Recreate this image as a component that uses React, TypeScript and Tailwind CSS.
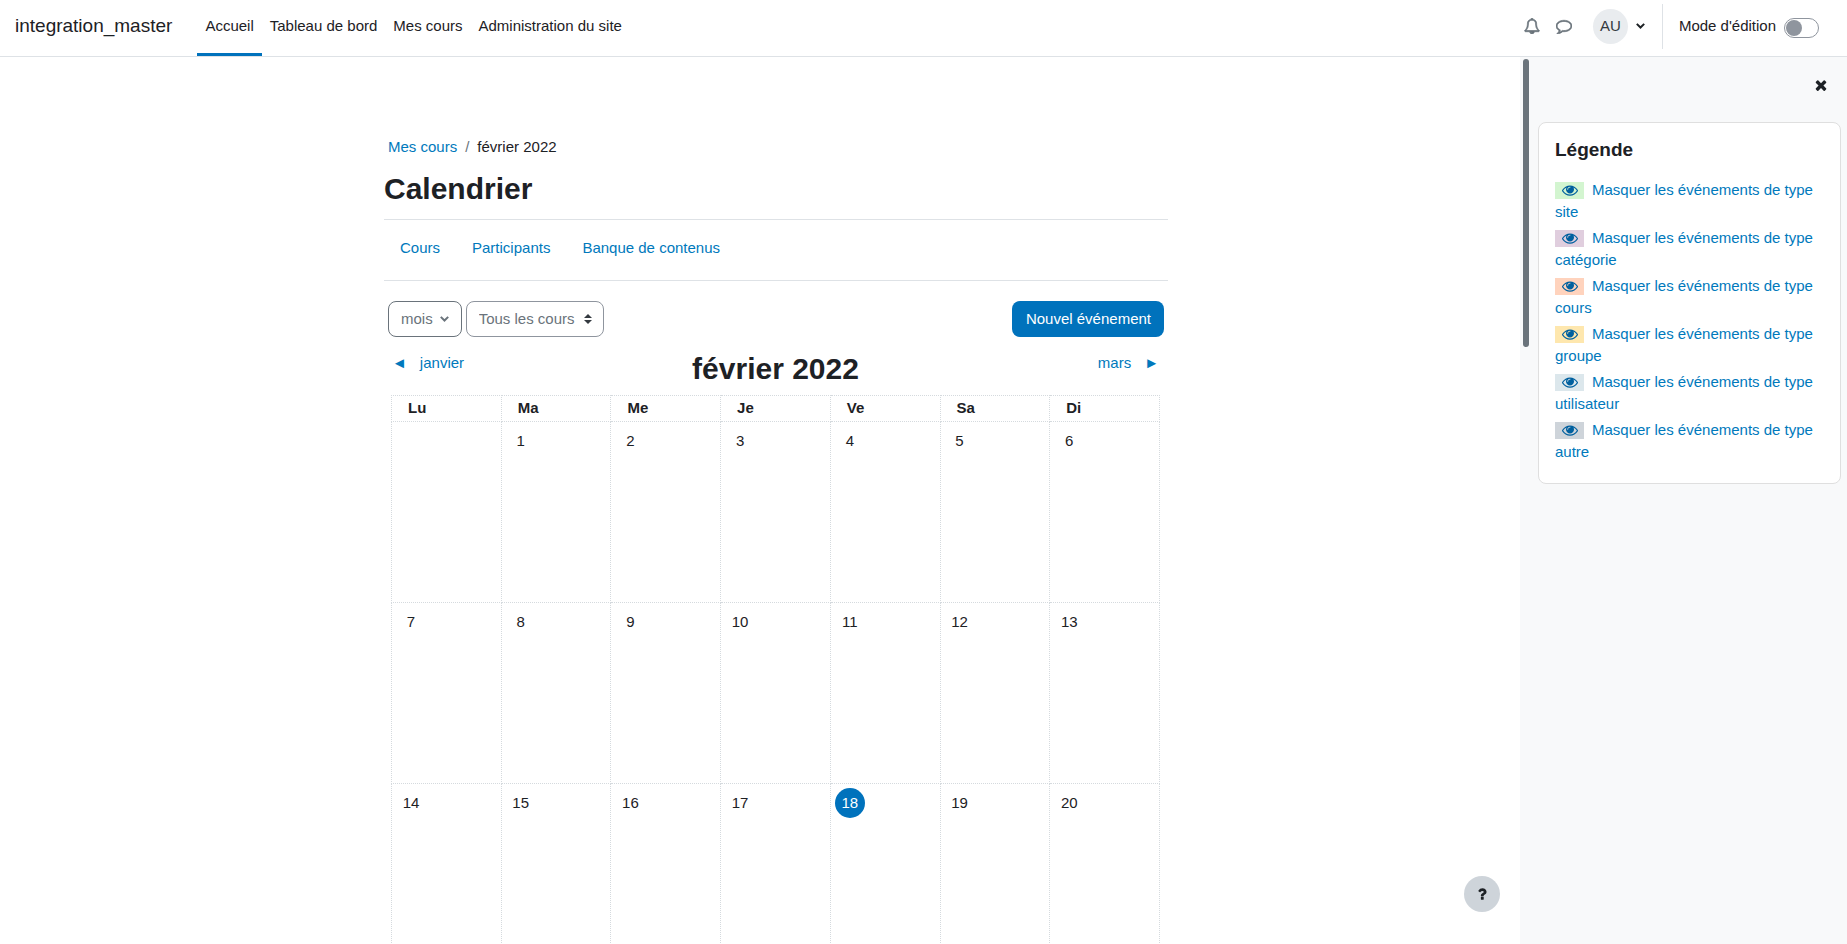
import React, { useState } from 'react';

const JOURS = ['Lu', 'Ma', 'Me', 'Je', 'Ve', 'Sa', 'Di'];

const SEMAINES: (number | null)[][] = [
  [null, 1, 2, 3, 4, 5, 6],
  [7, 8, 9, 10, 11, 12, 13],
  [14, 15, 16, 17, 18, 19, 20],
];

const AUJOURDHUI = 18;

const LEGENDE = [
  { type: 'site', color: 'bg-[#d3f5d0]' },
  { type: 'catégorie', color: 'bg-[#e0cede]' },
  { type: 'cours', color: 'bg-[#ffd3bd]' },
  { type: 'groupe', color: 'bg-[#fee7ae]' },
  { type: 'utilisateur', color: 'bg-[#dce7ec]' },
  { type: 'autre', color: 'bg-[#ced4da]' },
];

const ICONS = {
  bell: 'M912 1696q0-16-16-16-59 0-101.5-42.5t-42.5-101.5q0-16-16-16t-16 16q0 73 51.5 124.5t124.5 51.5q16 0 16-16zm-666-288h1300q-266-300-266-832 0-51-24-105t-69-103-121.5-80.5-169.5-31.5-169.5 31.5-121.5 80.5-69 103-24 105q0 532-266 832zm1482 0q0 52-38 90t-90 38h-448q0 106-75 181t-181 75-181-75-75-181h-448q-52 0-90-38t-38-90q50-42 91-88t85-119.5 74.5-158.5 50-206 19.5-260q0-152 117-282.5t307-158.5q-8-19-8-39 0-40 28-68t68-28 68 28 28 68q0 20-8 39 190 28 307 158.5t117 282.5q0 139 19.5 260t50 206 74.5 158.5 85 119.5 91 88z',
  comment: 'M896 384q-204 0-381.5 69.5t-282 187.5-104.5 255q0 112 71.5 213.5t201.5 175.5l87 50-27 96q-24 91-70 172 152-63 275-171l43-38 57 6q69 8 130 8 204 0 381.5-69.5t282-187.5 104.5-255-104.5-255-282-187.5-381.5-69.5zm896 512q0 174-120 321.5t-326 233-450 85.5q-70 0-145-8-198 175-460 242-49 14-114 22h-5q-15 0-27-10.5t-16-27.5v-1q-3-4-.5-12t2-10 4.5-9.5l6-9 7-8.5 8-9q7-8 31-34.5t34.5-38 31-39.5 32.5-51 27-59 26-76q-157-89-247.5-220t-90.5-281q0-130 71-248.5t191-204.5 286-136.5 348-50.5 348 50.5 286 136.5 191 204.5 71 248.5z',
  times: 'M1490 1322q0 40-28 68l-136 136q-28 28-68 28t-68-28l-294-294-294 294q-28 28-68 28t-68-28l-136-136q-28-28-28-68t28-68l294-294-294-294q-28-28-28-68t28-68l136-136q28-28 68-28t68 28l294 294 294-294q28-28 68-28t68 28l136 136q28 28 28 68t-28 68l-294 294 294 294q28 28 28 68z',
  eye: 'M1664 960q-152-236-381-353 61 104 61 225 0 185-131.5 316.5t-316.5 131.5-316.5-131.5-131.5-316.5q0-121 61-225-229 117-381 353 133 205 333.5 326.5t434.5 121.5 434.5-121.5 333.5-326.5zm-720-384q0-20-14-34t-34-14q-125 0-214.5 89.5t-89.5 214.5q0 20 14 34t34 14 34-14 14-34q0-86 61-147t147-61q20 0 34-14t14-34zm848 384q0 34-20 69-140 230-376.5 368.5t-499.5 138.5-499.5-139-376.5-368q-20-35-20-69t20-69q140-229 376.5-368t499.5-139 499.5 139 376.5 368q20 35 20 69z',
  question: 'M1088 1256v240q0 16-12 28t-28 12h-240q-16 0-28-12t-12-28v-240q0-16 12-28t28-12h240q16 0 28 12t12 28zm316-600q0 54-15.5 101t-35 76.5-55 59.5-57.5 43.5-61 35.5q-41 23-68.5 65t-27.5 67q0 17-12 32.5t-28 15.5h-240q-15 0-25.5-18.5t-10.5-37.5v-45q0-83 65-156.5t143-108.5q59-27 84-56t25-76q0-42-46.5-74t-107.5-32q-65 0-108 29-35 25-107 115-13 16-31 16-12 0-25-8l-164-125q-13-10-15.5-25t5.5-28q160-266 464-266 80 0 161 31t146 83 106 127.5 41 158.5z',
};

const Icon: React.FC<{ name: keyof typeof ICONS; className?: string }> = ({ name, className = 'size-4' }) => (
  <svg viewBox="0 0 1792 1792" fill="currentColor" className={className} aria-hidden="true">
    <path d={ICONS[name]} />
  </svg>
);

const Chevron: React.FC = () => (
  <svg viewBox="0 0 9 6" fill="none" stroke="currentColor" strokeWidth="2" className="w-[9px] h-[6px]" aria-hidden="true">
    <path d="M.8 .9L4.5 4.5 8.2 .9" />
  </svg>
);

const Header: React.FC = () => {
  const [edition, setEdition] = useState(false);

  return (
    <header className="flex h-[57px] shrink-0 items-stretch border-b border-[#dee2e6] bg-white pl-[15px] pr-7">
      <a href="#" className="mr-[25px] flex items-center pb-1 text-[19px]">integration_master</a>
      <nav className="flex">
        <a href="#" className="flex items-center border-b-3 border-[#0072bc] px-2 pb-px">Accueil</a>
        <a href="#" className="flex items-center px-2 pb-1">Tableau de bord</a>
        <a href="#" className="flex items-center px-2 pb-1">Mes cours</a>
        <a href="#" className="flex items-center px-2 pb-1">Administration du site</a>
      </nav>

      <div className="ml-auto flex items-center pb-1 text-[#6a737b]">
        <button type="button" aria-label="Notifications" className="mr-4">
          <Icon name="bell" className="size-4 stroke-current stroke-[80]" />
        </button>
        <button type="button" aria-label="Messages" className="mr-[21px]">
          <Icon name="comment" className="size-4 stroke-current stroke-[80]" />
        </button>
        <button type="button" aria-label="Menu utilisateur" className="flex items-center gap-2 text-[#1d2125]">
          <span className="flex size-[35px] items-center justify-center rounded-full bg-[#e9ecef] text-[#343a40]">AU</span>
          <Chevron />
        </button>
        <div className="ml-[17px] mr-4 h-[45px] w-px bg-[#dee2e6]" />
        <label htmlFor="edition" className="mr-2 text-[#1d2125]">Mode d'édition</label>
        <input
          id="edition"
          type="checkbox"
          checked={edition}
          onChange={(e) => setEdition(e.target.checked)}
          className="mt-1 flex h-5 w-[35px] appearance-none items-center rounded-full border border-[#8f959e] px-px before:size-4 before:rounded-full before:bg-[#8f959e] checked:justify-end"
        />
      </div>
    </header>
  );
};

const Calendrier: React.FC = () => (
  <table className="w-full table-fixed border-collapse">
    <thead>
      <tr className="h-[26px]">
        {JOURS.map((jour) => (
          <th key={jour} className="border border-dotted border-[#d5dade] pb-px pl-4 text-left font-bold">{jour}</th>
        ))}
      </tr>
    </thead>
    <tbody>
      {SEMAINES.map((semaine, i) => (
        <tr key={i} className="h-[181px]">
          {semaine.map((jour, j) => (
            <td key={j} className="border border-dotted border-[#d5dade] p-1 align-top">
              {jour && (
                <a
                  href="#"
                  className={`flex size-[30px] items-center justify-center rounded-full ${jour === AUJOURDHUI ? 'bg-[#0072bc] text-white' : ''}`}
                >
                  {jour}
                </a>
              )}
            </td>
          ))}
        </tr>
      ))}
    </tbody>
  </table>
);

const Legende: React.FC = () => (
  <aside className="w-[315px] shrink-0 bg-[#f8f9fa] pl-[6px] pr-[6px]">
    <div className="flex h-[65px] items-start justify-end pr-3 pt-5">
      <button type="button" aria-label="Fermer">
        <Icon name="times" />
      </button>
    </div>
    <section className="rounded-lg border border-[#dfdfdf] bg-white px-4 pb-4 pt-[15px]">
      <h2 className="mb-[18px] text-[19px] font-bold leading-[23px]">Légende</h2>
      <ul>
        {LEGENDE.map(({ type, color }) => (
          <li key={type} className="mb-1 leading-[22px]">
            <a href="#" className="text-[#0079bc]">
              <span className={`mr-2 inline-flex h-[17px] w-[29px] items-center justify-center align-[-3px] text-[#00609f] ${color}`}>
                <Icon name="eye" />
              </span>
              Masquer les événements de type {type}
            </a>
          </li>
        ))}
      </ul>
    </section>
  </aside>
);

const App: React.FC = () => {
  const [cours, setCours] = useState('tous');

  return (
    <div className="flex h-screen flex-col overflow-hidden bg-white text-[15px] leading-[22px] text-[#1d2125] [font-family:'Liberation_Sans',Arial,sans-serif]">
      <Header />

      <div className="flex min-h-0 flex-1">
        <div className="relative min-w-0 flex-1 overflow-hidden pl-8">
          <main className="mx-auto max-w-[784px] pt-[79px]">
            <nav aria-label="Fil d'Ariane" className="flex gap-2 pl-1">
              <a href="#" className="text-[#0079bc]">Mes cours</a>
              <span className="text-[#6a737b]">/</span>
              <span>février 2022</span>
            </nav>
            <h1 className="mt-[13px] text-[30px] font-bold leading-9">Calendrier</h1>

            <nav className="mt-3 flex h-[62px] items-center border-y border-[#dee2e6] pb-1 text-[#0079bc]">
              <a href="#" className="px-4">Cours</a>
              <a href="#" className="px-4">Participants</a>
              <a href="#" className="px-4">Banque de contenus</a>
            </nav>

            <div className="mt-5 flex gap-1 px-1 text-[#6a737b]">
              <button type="button" className="flex h-9 items-center gap-[7px] rounded-lg border border-[#6a737b] px-3">
                mois
                <Chevron />
              </button>
              <div className="relative">
                <select
                  aria-label="Cours"
                  value={cours}
                  onChange={(e) => setCours(e.target.value)}
                  className="h-9 w-[138px] appearance-none rounded-lg border border-[#8f959e] bg-white pl-3"
                >
                  <option value="tous">Tous les cours</option>
                </select>
                <svg viewBox="0 0 8 10" className="pointer-events-none absolute right-3 top-[13px] h-[10px] w-2 fill-[#343a40]" aria-hidden="true">
                  <path d="M4 0L0 4h8zM4 10L0 6h8z" />
                </svg>
              </div>
              <button type="button" className="ml-auto h-9 rounded-lg bg-[#0072bc] pl-[14px] pr-[13px] text-white">
                Nouvel événement
              </button>
            </div>

            <div className="mt-[13px] flex justify-between px-1">
              <a href="#" className="flex flex-1 gap-[13px] pl-1 pt-[2px] text-[#0079bc]">
                <span>◄</span>
                <span>janvier</span>
              </a>
              <h2 className="pt-px text-[30px] font-bold leading-[36px]">février 2022</h2>
              <a href="#" className="flex flex-1 justify-end gap-[13px] pr-[5px] pt-[2px] text-[#0079bc]">
                <span>mars</span>
                <span>►</span>
              </a>
            </div>

            <div className="mt-2 pl-[7px] pr-2">
              <Calendrier />
            </div>
          </main>

          <button
            type="button"
            aria-label="Aide"
            className="absolute bottom-8 right-5 flex size-9 items-center justify-center rounded-full bg-[#ced4da]"
          >
            <Icon name="question" />
          </button>
        </div>

        {/* Scrollbar */}
        <div className="w-3 shrink-0 bg-[#f8f9fa] px-[3px] pt-[2px]">
          <div className="h-[288px] rounded-full bg-[#6a737b]" />
        </div>

        <Legende />
      </div>
    </div>
  );
};

export default App;
